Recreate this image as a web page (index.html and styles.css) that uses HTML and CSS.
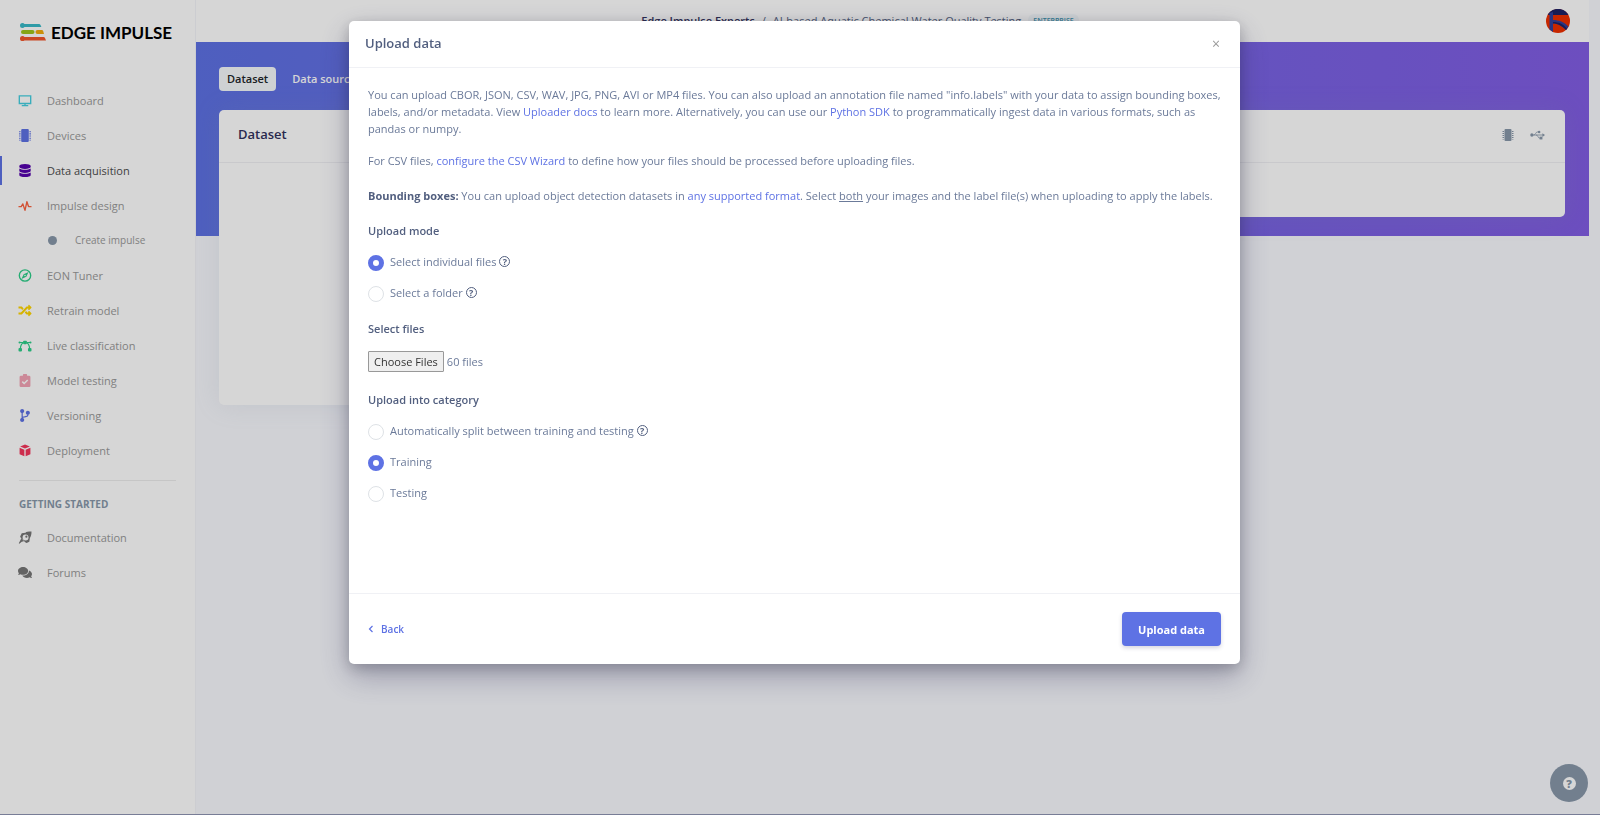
FILE: index.html
```
<!DOCTYPE html>
<html lang="en">
<head>
  <meta charset="UTF-8">
  <meta name="viewport" content="width=device-width, initial-scale=1.0">
  <title>Upload data - Edge Impulse</title>
  <link rel="stylesheet" href="styles.css">
</head>
<body>
  <svg class="symbols" aria-hidden="true">
    <symbol id="icon-chip" viewBox="0 0 24 24">
      <rect x="5" y="0" width="14" height="24" rx="2"></rect>
      <path d="M1 4h3v2H1zM1 8h3v2H1zM1 12h3v2H1zM1 16h3v2H1zM1 20h3v1H1zM20 4h3v2h-3zM20 8h3v2h-3zM20 12h3v2h-3zM20 16h3v2h-3zM20 20h3v1h-3z"></path>
    </symbol>
  </svg>

  <div class="page">
    <aside class="sidebar">
      <a class="brand" href="#">
        <svg class="brand-mark" viewBox="0 0 26 18">
          <path fill="#38b9c8" d="M2.5 0c.9 0 1.5.4 2 1H19c.8 0 1.2.4 1.5 1l.9 2H4.5c-.5.6-1.1 1-2 1a2.5 2.5 0 0 1 0-5z"></path>
          <rect fill="#9fc51b" x="1" y="7" width="13.5" height="4" rx="2"></rect>
          <path fill="#f2ac0c" d="M17.5 7h4c1 0 1.4.5 1.7 1.2L24 11h-6.5a2 2 0 0 1 0-4z"></path>
          <path fill="#f2562b" d="M2.5 13c.9 0 1.5.4 2 1h19c.8 0 1.2.4 1.5 1l1 2.5H4.5c-.5.4-1.1.6-2 .6a2.5 2.5 0 0 1 0-5.1z"></path>
        </svg>
        <span class="brand-name">EDGE IMPULSE</span>
      </a>

      <nav class="nav">
        <a class="nav-link" href="#">
          <svg class="nav-icon cyan" viewBox="0 0 24 24"><path fill="none" stroke="currentColor" stroke-width="2.5" d="M1.500 3.500h21v14h-21zM6 21.500h12M12 18v3"></path></svg>
          Dashboard
        </a>
        <a class="nav-link" href="#">
          <svg class="nav-icon blue"><use href="#icon-chip"></use></svg>
          Devices
        </a>
        <a class="nav-link active" href="#">
          <svg class="nav-icon indigo" viewBox="0 0 448 512"><path d="M448 73.143v45.714C448 159.143 347.667 192 224 192S0 159.143 0 118.857V73.143C0 32.857 100.333 0 224 0s224 32.857 224 73.143zM448 176v102.857C448 319.143 347.667 352 224 352S0 319.143 0 278.857V176c48.125 33.143 136.208 48.572 224 48.572S399.874 209.143 448 176zm0 160v102.857C448 479.143 347.667 512 224 512S0 479.143 0 438.857V336c48.125 33.143 136.208 48.572 224 48.572S399.874 369.143 448 336z"></path></svg>
          Data acquisition
        </a>
        <a class="nav-link" href="#">
          <svg class="nav-icon orange" viewBox="0 0 24 24"><path fill="none" stroke="currentColor" stroke-width="2.5" stroke-linejoin="round" d="M0 14h5l3-5 4 12 3.500-16 3 9H24"></path></svg>
          Impulse design
        </a>
        <a class="nav-link nav-sub" href="#">
          <span class="dot"></span>
          Create impulse
        </a>
        <a class="nav-link" href="#">
          <svg class="nav-icon green" viewBox="0 0 24 24"><circle cx="12" cy="12" r="10.5" fill="none" stroke="currentColor" stroke-width="2.5"></circle><path fill-rule="evenodd" d="M18.500 5.500l-4 9-9 4 4-9zM12 10.500a1.500 1.500 0 1 0 0 3 1.500 1.500 0 0 0 0-3z"></path></svg>
          EON Tuner
        </a>
        <a class="nav-link" href="#">
          <svg class="nav-icon yellow" viewBox="0 0 512 512"><path d="M504.971 359.029c9.373 9.373 9.373 24.569 0 33.941l-80 79.984c-15.010 15.010-40.971 4.490-40.971-16.971V416h-58.785a12.004 12.004 0 0 1-8.773-3.812l-70.556-75.596 53.333-57.143L352 336h32v-39.981c0-21.438 25.943-31.998 40.971-16.971l80 79.981zM12 176h84l52.781 56.551 53.333-57.143-70.556-75.596A11.999 11.999 0 0 0 122.785 96H12c-6.627 0-12 5.373-12 12v56c0 6.627 5.373 12 12 12zm372 0v39.984c0 21.460 25.961 31.980 40.971 16.971l80-79.984c9.373-9.373 9.373-24.569 0-33.941l-80-79.981C409.943 24.021 384 34.582 384 56.019V96h-58.785a12.004 12.004 0 0 0-8.773 3.812L96 336H12c-6.627 0-12 5.373-12 12v56c0 6.627 5.373 12 12 12h110.785c3.326 0 6.503-1.381 8.773-3.812L352 176h32z"></path></svg>
          Retrain model
        </a>
        <a class="nav-link" href="#">
          <svg class="nav-icon green" viewBox="0 0 24 24"><path fill="none" stroke="currentColor" stroke-width="2.2" d="M2 6.500h7M15 6.500h7M9 7c-4 2-5.500 6-5.500 12M15 7c4 2 5.500 6 5.500 12"></path><rect x="8.5" y="3" width="7" height="6.5" rx="1.5"></rect><circle cx="2" cy="6.5" r="2"></circle><circle cx="22" cy="6.5" r="2"></circle><rect x="0" y="16.5" width="6.5" height="6.5" rx="2"></rect><rect x="17.5" y="16.5" width="6.5" height="6.5" rx="2"></rect></svg>
          Live classification
        </a>
        <a class="nav-link" href="#">
          <svg class="nav-icon pink" viewBox="0 0 24 24"><path fill-rule="evenodd" d="M4.500 3H8a4 4 0 0 1 8 0h3.500A2.500 2.500 0 0 1 22 5.500v16a2.500 2.500 0 0 1-2.500 2.500h-15A2.500 2.500 0 0 1 2 21.500v-16A2.500 2.500 0 0 1 4.500 3zM10.500 19.500l7.500-7.500-2-2-5.500 5.500L8 13l-2 2z"></path></svg>
          Model testing
        </a>
        <a class="nav-link" href="#">
          <svg class="nav-icon blue" viewBox="0 0 384 512"><path d="M384 144c0-44.200-35.800-80-80-80s-80 35.800-80 80c0 36.400 24.300 67.100 57.500 76.800-.6 16.100-4.200 28.500-11 36.900-15.400 19.200-49.300 22.400-85.200 25.700-28.200 2.600-57.400 5.400-81.300 16.900v-144c32.500-10.200 56-40.500 56-76.300 0-44.200-35.800-80-80-80S0 35.800 0 80c0 35.800 23.500 66.100 56 76.300v199.300C23.500 365.900 0 396.200 0 432c0 44.200 35.800 80 80 80s80-35.800 80-80c0-34-21.200-63.100-51.200-74.600 3.100-5.200 7.800-9.800 14.900-13.400 16.200-8.200 40.400-10.400 66.100-12.800 42.200-3.900 90-8.400 118.200-43.400 14-17.400 21.100-39.800 21.600-67.900 31.600-10.800 54.400-40.700 54.400-75.900z"></path></svg>
          Versioning
        </a>
        <a class="nav-link" href="#">
          <svg class="nav-icon red" viewBox="0 0 24 24"><path d="M12 1l9 3.500-9 3.700-9-3.700zM2 7l8.800 3.500v12.300L2 19zM22 7l-8.800 3.500v12.300L22 19z"></path></svg>
          Deployment
        </a>
      </nav>

      <hr class="divider">
      <h6 class="nav-heading">GETTING STARTED</h6>

      <nav class="nav">
        <a class="nav-link" href="#">
          <svg class="nav-icon gray" viewBox="0 0 24 24"><path fill-rule="evenodd" d="M24 1c0 6-1 9-3 12l-1 7-5 2-2-1-8-7-2-4 3-6 7-1C14 1.500 18 1 24 1zM13 6.500a5.500 5.500 0 1 0 .1 11A5.500 5.500 0 0 0 13 6.500z"></path><circle cx="14.5" cy="10.5" r="2"></circle><path d="M5 14l5 5-4 1-4.500 3.500-1-1L3 18z"></path></svg>
          Documentation
        </a>
        <a class="nav-link" href="#">
          <svg class="nav-icon gray" viewBox="0 0 576 512"><path d="M416 192c0-88.400-93.100-160-208-160S0 103.600 0 192c0 34.300 14.100 65.900 38 92-13.400 30.200-35.500 54.200-35.800 54.500-2.200 2.300-2.800 5.700-1.500 8.700S4.800 352 8 352c36.600 0 66.900-12.300 88.700-25 32.200 15.700 70.300 25 111.300 25 114.900 0 208-71.600 208-160zm122 220c23.900-26 38-57.700 38-92 0-66.900-53.500-124.200-129.300-148.100.9 6.600 1.300 13.300 1.300 20.100 0 105.900-107.700 192-240 192-10.800 0-21.300-.8-31.700-1.900C207.800 439.600 281.800 480 368 480c41 0 79.100-9.200 111.300-25 21.800 12.700 52.100 25 88.700 25 3.200 0 6.100-1.900 7.300-4.800 1.300-2.900.7-6.300-1.500-8.700-.3-.3-22.400-24.200-35.800-54.500z"></path></svg>
          Forums
        </a>
      </nav>
    </aside>

    <main class="main">
      <header class="topbar">
        <div class="breadcrumb">
          <a class="owner" href="#">Edge Impulse Experts</a>
          <span>/</span>
          <a href="#">AI-based Aquatic Chemical Water Quality Testing</a>
          <span class="plan">ENTERPRISE</span>
        </div>
        <button class="avatar" type="button" aria-label="Account">
          <svg viewBox="0 0 24 24"><circle cx="12" cy="12" r="12" fill="#ee2f00"></circle><path fill="#1d2266" d="M2.500 4.500a12 12 0 0 1 19 0l.7 1.500H2z"></path><path fill="#32409b" d="M3.500 4l3.500-1v8c6 0 11 2 15.500 6.500l-2.500 3.500C16 17 12 14.500 7 14.500V23L3.500 20.500z"></path><path fill="#1d2266" d="M7 13c6 0 10 2 14 6.500l-1 1.500C16 17 12 14.500 7 14.500z"></path></svg>
        </button>
      </header>

      <section class="hero">
        <div class="tabs">
          <button class="tab active" type="button">Dataset</button>
          <button class="tab" type="button">Data sources</button>
        </div>
        <div class="cards">
          <div class="card card-tall">
            <div class="card-header"><h3>Dataset</h3></div>
          </div>
          <div class="card">
            <div class="card-header card-tools">
              <button class="tool" type="button" aria-label="Connect a device"><svg class="tool-chip"><use href="#icon-chip"></use></svg></button>
              <button class="tool" type="button" aria-label="Connect using USB">
                <svg class="tool-usb" viewBox="0 0 32 20"><path fill="none" stroke="currentColor" stroke-width="1.8" d="M4 10h24M8 10c4 0 4-6.500 8-6.500h3M13 10c4 0 4 6.500 7 6.500h3"></path><circle cx="4" cy="10" r="3.5"></circle><circle cx="19.5" cy="3.5" r="2.7"></circle><rect x="20.5" y="13.5" width="6" height="6"></rect><path d="M26.500 6l5.500 4-5.500 4z"></path></svg>
              </button>
            </div>
          </div>
        </div>
      </section>
    </main>

    <button class="help-button" type="button" aria-label="Help"><span>?</span></button>
  </div>

  <div class="backdrop">
    <form class="modal" role="dialog" aria-labelledby="modal-title">
      <div class="modal-header">
        <h2 id="modal-title">Upload data</h2>
        <button class="close" type="button" aria-label="Close">×</button>
      </div>

      <div class="modal-body">
        <p>You can upload CBOR, JSON, CSV, WAV, JPG, PNG, AVI or MP4 files. You can also upload an annotation file named "info.labels" with your data to assign bounding boxes, labels, and/or metadata. View <a href="#">Uploader docs</a> to learn more. Alternatively, you can use our <a href="#">Python SDK</a> to programmatically ingest data in various formats, such as pandas or numpy.</p>
        <p>For CSV files, <a href="#">configure the CSV Wizard</a> to define how your files should be processed before uploading files.</p>
        <p><strong>Bounding boxes:</strong> You can upload object detection datasets in <a href="#">any supported format</a>. Select <u>both</u> your images and the label file(s) when uploading to apply the labels.</p>

        <fieldset class="group">
          <legend>Upload mode</legend>
          <div class="option">
            <input type="radio" name="mode" id="mode-files" checked>
            <label for="mode-files">Select individual files</label>
            <span class="hint">?</span>
          </div>
          <div class="option">
            <input type="radio" name="mode" id="mode-folder">
            <label for="mode-folder">Select a folder</label>
            <span class="hint">?</span>
          </div>
        </fieldset>

        <div class="group">
          <label class="group-title" for="files">Select files</label>
          <input class="file-input" type="file" id="files" multiple>
        </div>

        <fieldset class="group">
          <legend>Upload into category</legend>
          <div class="option">
            <input type="radio" name="category" id="category-split">
            <label for="category-split">Automatically split between training and testing</label>
            <span class="hint">?</span>
          </div>
          <div class="option">
            <input type="radio" name="category" id="category-training" checked>
            <label for="category-training">Training</label>
          </div>
          <div class="option">
            <input type="radio" name="category" id="category-testing">
            <label for="category-testing">Testing</label>
          </div>
        </fieldset>
      </div>

      <div class="modal-footer">
        <a class="back" href="#">
          <svg viewBox="0 0 6 8"><path fill="none" stroke="currentColor" stroke-width="1.2" d="M4.500 1l-3 3 3 3"></path></svg>
          Back
        </a>
        <button class="submit" type="submit">Upload data</button>
      </div>
    </form>
  </div>

  <script src="script.js"></script>
</body>
</html>
```

FILE: styles.css
```
* {
  box-sizing: border-box;
}

body {
  margin: 0;
  font-family: "Open Sans", sans-serif;
  font-size: 11px;
  line-height: 17px;
  color: #6b7a99;
  background: #f8f9fe;
}

a {
  color: #5e72e4;
  text-decoration: none;
}

button {
  padding: 0;
  border: 0;
  background: none;
  font: inherit;
  cursor: pointer;
}

svg {
  display: block;
  fill: currentColor;
}

.symbols {
  display: none;
}

.page {
  display: flex;
  min-height: 100vh;
  padding-right: 11px;
  border-bottom: 1px solid #8f96b3;
}

/* Sidebar */
.sidebar {
  flex: 0 0 196px;
  background: #fff;
  border-right: 1px solid #f4f5f9;
}

.brand {
  display: flex;
  align-items: center;
  gap: 5px;
  height: 64px;
  margin-bottom: 22px;
  padding-left: 20px;
  color: #000;
}

.brand-mark {
  width: 26px;
  height: 18px;
}

.brand-name {
  font-family: Lato, sans-serif;
  font-size: 17px;
  font-weight: 700;
}

.nav {
  display: flex;
  flex-direction: column;
  gap: 6px;
}

.nav-link {
  display: flex;
  align-items: center;
  gap: 15px;
  height: 29px;
  padding-left: 18px;
  color: #999;
}

.nav-link.active {
  padding-left: 16px;
  border-left: 2px solid #5e72e4;
  color: #4d4d4d;
}

.nav-icon {
  width: 14px;
  height: 13px;
}

.nav-sub {
  gap: 18px;
  padding-left: 48px;
  font-size: 10px;
}

.dot {
  width: 9px;
  height: 9px;
  border-radius: 50%;
  background: #8898aa;
}

.cyan { color: #45cfe0; }
.blue { color: #5e72e4; }
.indigo { color: #5603ad; }
.orange { color: #fb6340; }
.green { color: #2dce89; }
.yellow { color: #ffd600; }
.pink { color: #f3a4b5; }
.red { color: #f5365c; }
.gray { color: #777; }

.divider {
  margin: 15px 19px;
  border: 0;
  border-top: 1px solid #ececec;
}

.nav-heading {
  margin: 0 0 10px;
  padding-left: 19px;
  font-size: 10px;
  font-weight: 700;
  color: #8898aa;
}

/* Main area */
.main {
  flex: 1;
  min-width: 0;
}

.topbar {
  display: flex;
  align-items: center;
  height: 42px;
  background: #fff;
}

.breadcrumb {
  flex: 1;
  display: flex;
  justify-content: center;
  align-items: center;
  gap: 7px;
  padding-bottom: 2px;
}

.breadcrumb,
.breadcrumb a {
  color: #525f7f;
}

.breadcrumb .owner {
  font-weight: 600;
  color: #32325d;
}

.plan {
  padding: 0 5px;
  border-radius: 6px;
  background: #f4f9fc;
  color: #3f93ad;
  font-size: 7px;
  font-weight: 600;
  line-height: 13px;
}

.avatar {
  width: 24px;
  height: 24px;
  margin: 0 19px 0 22px;
}

.hero {
  height: 194px;
  padding: 25px 24px 0 23px;
  background: linear-gradient(87deg, #5e72e4 0%, #825ee4 100%);
}

.tabs {
  display: flex;
  gap: 8px;
  margin-bottom: 19px;
}

.tab {
  height: 24px;
  padding: 0 8px 1px;
  border-radius: 4px;
  font-weight: 600;
  color: #fff;
}

.tab.active {
  background: #f6fafc;
  color: #212529;
}

.cards {
  display: grid;
  grid-template-columns: 1fr 1fr;
  align-items: start;
  gap: 24px;
}

.card {
  min-height: 107px;
  border-radius: 5px;
  background: #fff;
  box-shadow: 0 0 26px rgba(136, 152, 170, 0.15);
}

.card-tall {
  min-height: 295px;
}

.card-header {
  display: flex;
  align-items: center;
  height: 53px;
  padding: 0 20px 3px 19px;
  border-bottom: 1px solid #f0f0f3;
}

.card-header h3 {
  margin: 0;
  font-size: 13px;
  font-weight: 600;
  color: #32325d;
}

.card-tools {
  justify-content: flex-end;
  gap: 16px;
}

.tool {
  color: #8898aa;
}

.tool-chip {
  width: 12px;
  height: 12px;
}

.tool-usb {
  width: 15px;
  height: 10px;
}

.help-button {
  position: fixed;
  right: 12px;
  bottom: 13px;
  width: 38px;
  height: 38px;
  border-radius: 50%;
  background: #8898aa;
}

.help-button span {
  display: block;
  width: 13px;
  margin: 0 auto;
  border-radius: 50%;
  background: #fff;
  color: #8898aa;
  font-weight: 800;
  line-height: 13px;
}

/* Upload dialog */
.backdrop {
  position: fixed;
  inset: 0;
  padding: 21px 27px 21px 16px;
  background: rgba(0, 0, 0, 0.16);
}

.modal {
  max-width: 891px;
  margin: 0 auto;
  border-radius: 5px;
  background: #fff;
  box-shadow: 0 12px 30px rgba(50, 50, 93, 0.35), 0 4px 14px rgba(0, 0, 0, 0.2);
}

.modal-header {
  display: flex;
  justify-content: space-between;
  align-items: center;
  height: 47px;
  padding: 0 20px 2px 16px;
  border-bottom: 1px solid #f0f1f5;
}

.modal-header h2 {
  margin: 0;
  font-size: 13px;
  font-weight: 600;
  color: #525f7f;
}

.close {
  font-size: 14px;
  color: #999;
}

.modal-body {
  padding: 18px 19px 92px;
}

.modal-body p {
  margin: 0 0 18px;
}

.modal-body p:first-child {
  margin-bottom: 15px;
}

.modal-body strong {
  color: #525f7f;
}

.group {
  margin: 0 0 19px;
  padding: 0;
  border: 0;
}

.group:last-child {
  margin-bottom: 0;
}

.group legend,
.group-title {
  display: block;
  margin-bottom: 14px;
  padding: 0;
  font-weight: 600;
  color: #525f7f;
}

.option {
  display: flex;
  align-items: center;
  height: 17px;
}

.option + .option {
  margin-top: 14px;
}

.option input {
  appearance: none;
  width: 16px;
  height: 16px;
  margin: 2px 6px 0 0;
  border: 1px solid #dee2e6;
  border-radius: 50%;
  background: #fff;
}

.option input:checked {
  border: 5px solid #5e72e4;
}

.hint {
  width: 11px;
  height: 11px;
  margin-left: 3px;
  border: 1px solid #525f7f;
  border-radius: 50%;
  color: #525f7f;
  font-size: 9px;
  font-weight: 700;
  line-height: 9px;
  text-align: center;
}

.file-input {
  display: block;
  font: inherit;
  color: inherit;
}

.file-input::file-selector-button {
  height: 21px;
  margin-right: 3px;
  padding: 0 5px;
  border: 1px solid #999;
  border-radius: 1px;
  background: #efefef;
  font: inherit;
  color: #333;
}

.modal-footer {
  display: flex;
  justify-content: space-between;
  align-items: center;
  padding: 18px 19px;
  border-top: 1px solid #f0f1f5;
}

.back {
  display: flex;
  align-items: center;
  gap: 7px;
  font-size: 10px;
  font-weight: 600;
}

.back svg {
  width: 6px;
  height: 8px;
}

.submit {
  height: 34px;
  padding: 0 16px;
  border-radius: 4px;
  background: #5e72e4;
  box-shadow: 0 2px 4px rgba(50, 50, 93, 0.2);
  color: #fff;
  font-weight: 700;
}
```

FILE: script.js
```
// Put the queued samples in the file picker
const queue = new DataTransfer();

for (let i = 1; i <= 60; i++) {
  queue.items.add(new File(['timestamp,value\n'], `sample-${i}.csv`, { type: 'text/csv' }));
}

document.getElementById('files').files = queue.files;
```
